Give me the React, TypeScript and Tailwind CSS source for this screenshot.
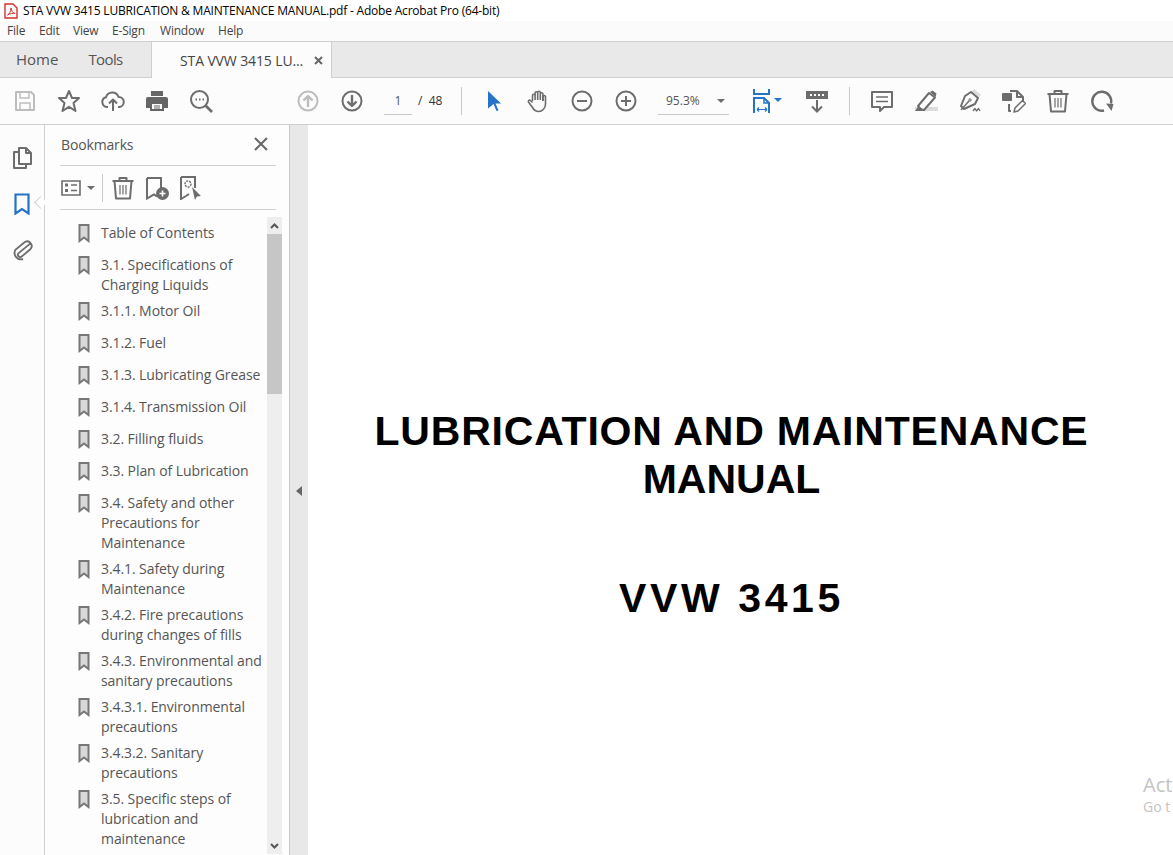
import { ReactNode } from "react";

const ui = "font-['Open_Sans','Noto_Sans',sans-serif]";

const Ico = ({ children, size = 24, color = "#6d6d6d", sw = 2 }: { children: ReactNode; size?: number; color?: string; sw?: number }) => (
  <svg width={size} height={size} viewBox="0 0 24 24" fill="none" stroke={color} strokeWidth={sw} strokeLinejoin="round">
    {children}
  </svg>
);

const Slot = ({ children }: { children: ReactNode }) => (
  <div className="w-[44px] h-[44px] flex items-center justify-center shrink-0">{children}</div>
);

const Sep = () => <div className="w-px h-[28px] bg-[#c9c9c9] shrink-0" />;

const Caret = ({ color = "#6d6d6d" }: { color?: string }) => (
  <div className="w-0 h-0 border-x-[4px] border-x-transparent border-t-[4px]" style={{ borderTopColor: color }} />
);

const TrashIcon = ({ size = 24 }: { size?: number }) => (
  <Ico size={size}>
    <path d="M1.500 5h21M8.500 5V2h7v3M3.500 5l1.500 17.500h14L20.500 5" />
    <path d="M9 9v9.500M12 9v9.500M15 9v9.500" strokeWidth={1.200} />
  </Ico>
);

const BookmarkRow = ({ lines }: { lines: string[] }) => (
  <div className="flex min-h-[32px] pb-[6px] pl-[18px]">
    <div className="w-[23px] shrink-0 pt-[1px]">
      <svg width="12" height="19" viewBox="0 0 12 19" fill="none" stroke="#777" strokeWidth="2">
        <path d="M1.500 1h9v16L6 13.500 1.500 17z" fill="#d8d8d8" />
      </svg>
    </div>
    <div className="text-[14px] leading-[20px] text-[#555] tracking-[-0.08px] whitespace-nowrap">
      {lines.map((l) => (
        <div key={l}>{l}</div>
      ))}
    </div>
  </div>
);

const bookmarks = [
  ["Table of Contents"],
  ["3.1. Specifications of", "Charging Liquids"],
  ["3.1.1. Motor Oil"],
  ["3.1.2. Fuel"],
  ["3.1.3. Lubricating Grease"],
  ["3.1.4. Transmission Oil"],
  ["3.2. Filling fluids"],
  ["3.3. Plan of Lubrication"],
  ["3.4. Safety and other", "Precautions for", "Maintenance"],
  ["3.4.1. Safety during", "Maintenance"],
  ["3.4.2. Fire precautions", "during changes of fills"],
  ["3.4.3. Environmental and", "sanitary precautions"],
  ["3.4.3.1. Environmental", "precautions"],
  ["3.4.3.2. Sanitary", "precautions"],
  ["3.5. Specific steps of", "lubrication and", "maintenance"],
];

export default function App() {
  return (
    <div className={`${ui} relative w-[1173px] h-[855px] overflow-hidden bg-white flex flex-col`}>
      {/* title bar */}
      <div className="h-[21px] flex items-center pl-[4px] shrink-0 bg-white">
        <svg width="14" height="16" viewBox="0 0 14 16" fill="none" className="mr-[5px]">
          <path d="M1 1h8l4 4v10H1z" fill="#fff" stroke="#d3312b" strokeWidth="1.400" />
          <path d="M3.500 12c2-1 3.500-4 3.500-7 .5 3 2 5 4 5.500-2.500-.5-5 0-7.500 1.500z" stroke="#d3312b" strokeWidth="1" />
        </svg>
        <span className="text-[12px] text-black tracking-[-0.2px] whitespace-nowrap">STA VVW 3415 LUBRICATION &amp; MAINTENANCE MANUAL.pdf - Adobe Acrobat Pro (64-bit)</span>
      </div>
      {/* menu bar */}
      <div className="h-[20px] flex items-center shrink-0 bg-[#fbfbfb] text-[12px] text-[#444] tracking-[-0.2px] pl-[7px]">
        <span className="w-[32px]">File</span>
        <span className="w-[34px]">Edit</span>
        <span className="w-[39px]">View</span>
        <span className="w-[48px]">E-Sign</span>
        <span className="w-[58px]">Window</span>
        <span>Help</span>
      </div>
      {/* tabs */}
      <div className="h-[37px] flex shrink-0 bg-[#e9e9e9] border-t border-t-[#cfcfcf] border-b border-b-[#cfcfcf] text-[15px] text-[#555]">
        <div className="w-[151px] flex items-center pl-[16px] gap-[30px]">
          <span>Home</span>
          <span className="tracking-[-0.6px]">Tools</span>
        </div>
        <div className="w-[181px] h-[36px] flex items-center pl-[28px] bg-[#fcfcfc] border-x border-x-[#cfcfcf] text-[14px] tracking-[-0.12px] text-[#444]">
          <span className="w-[134px] whitespace-nowrap">STA VVW 3415 LU...</span>
          <svg width="9" height="9" viewBox="0 0 9 9" stroke="#666" strokeWidth="2">
            <path d="M1 1l7 7M8 1L1 8" />
          </svg>
        </div>
      </div>
      {/* toolbar */}
      <div className="h-[47px] flex items-center shrink-0 bg-[#fcfcfc] border-b border-b-[#cfcfcf] pl-[3px]">
        <Slot>
          <Ico color="#bdbdbd">
            <path d="M3 3h15l3 3v15H3z" />
            <path d="M7 3v6h9V3M7 21v-7h10v7" strokeWidth={1.500} />
          </Ico>
        </Slot>
        <Slot>
          <Ico>
            <path d="M12 2l3 7h7l-5.500 5 2 8L12 17.800 5.500 22l2-8L2 9h7z" />
          </Ico>
        </Slot>
        <Slot>
          <Ico>
            <path d="M7 18H6a5 5 0 0 1-1-9.800A6.500 6.500 0 0 1 17.500 8 5 5 0 0 1 18 18h-1" />
            <path d="M12 22V11M8 14.500l4-4 4 4" />
          </Ico>
        </Slot>
        <Slot>
          <svg width="24" height="24" viewBox="0 0 24 24" fill="#666">
            <path d="M6 2h12v5H6z" />
            <path fillRule="evenodd" d="M3 8h18a2 2 0 0 1 2 2v9h-4v3H5v-3H1v-9a2 2 0 0 1 2-2zm4 7v5h10v-5z" />
            <path d="M9 16.500h6v1H9zM9 18.500h6v1H9z" />
          </svg>
        </Slot>
        <Slot>
          <Ico>
            <circle cx="10.500" cy="10.500" r="8.500" />
            <path d="M16.500 16.500L23 23" strokeWidth={2.600} />
            <path d="M6.500 10.500h1.500M10 10.500h1.500M13.500 10.500h1.500" />
          </Ico>
        </Slot>
        <div className="w-[63px] shrink-0" />
        <Slot>
          <Ico color="#bdbdbd">
            <circle cx="12" cy="12" r="9.500" />
            <path d="M12 18V7M7.500 11.500L12 7l4.500 4.500" strokeWidth={2.400} />
          </Ico>
        </Slot>
        <Slot>
          <Ico>
            <circle cx="12" cy="12" r="9.500" />
            <path d="M12 6v11M7.500 12.500L12 17l4.500-4.500" strokeWidth={2.400} />
          </Ico>
        </Slot>
        <div className="ml-[10px] w-[28px] h-[28px] border-b border-b-[#c9c9c9] flex items-center justify-center text-[12px] text-[#555]">1</div>
        <span className="ml-[6px] w-[40px] text-[12px] text-[#333] whitespace-nowrap">/ &nbsp;48</span>
        <div className="ml-[3px] flex items-center">
          <Sep />
        </div>
        <div className="w-[10px] shrink-0" />
        <Slot>
          <svg width="24" height="24" viewBox="0 0 24 24" fill="#2473c8">
            <path d="M6 2l13 12.500h-5.500l3 7-2 .500-3-7L6 19.500z" />
          </svg>
        </Slot>
        <Slot>
          <Ico sw={1.600}>
            <path d="M6.500 12V6.500a1.300 1.300 0 0 1 2.600 0V11M9.100 11V4a1.300 1.300 0 0 1 2.600 0v7M11.700 11V3.500a1.300 1.300 0 0 1 2.600 0V11M14.300 11V5a1.300 1.300 0 0 1 2.600 0v7" />
            <path d="M17 12V7.500a1.300 1.300 0 0 1 2.500 0V15c0 4-3 7.500-7 7.500-3 0-4.500-1.500-6-4L2.500 13c-.7-1.300.8-2.500 2-1.500l2 2" />
          </Ico>
        </Slot>
        <Slot>
          <Ico>
            <circle cx="12" cy="12" r="9.500" />
            <path d="M7 12h10" />
          </Ico>
        </Slot>
        <Slot>
          <Ico>
            <circle cx="12" cy="12" r="9.500" />
            <path d="M7 12h10M12 7v10" />
          </Ico>
        </Slot>
        <div className="ml-[10px] w-[71px] h-[28px] border-b border-b-[#c9c9c9] flex items-center pl-[8px] text-[12px] text-[#555] shrink-0">
          <span className="w-[51px]">95.3%</span>
          <Caret />
        </div>
        <div className="w-[11px] shrink-0" />
        <Slot>
          <div className="flex items-start gap-[2px] ml-[10px]">
            <svg width="20" height="24" viewBox="0 0 20 24" fill="none" stroke="#2473c8" strokeWidth="2">
              <path d="M2 0v5h15V0M2 24V9h10l5 5v10" />
              <path d="M12 9v5h5" strokeWidth="1.500" />
              <path d="M5 20.500h10M5 20.500l2-2M5 20.500l2 2M15 20.500l-2-2M15 20.500l-2 2" strokeWidth="1.200" />
            </svg>
            <div className="mt-[9px]">
              <Caret color="#2473c8" />
            </div>
          </div>
        </Slot>
        <div className="w-[11px] shrink-0" />
        <Slot>
          <svg width="24" height="24" viewBox="0 0 24 24" fill="none">
            <path d="M1 2h22v8H1z" fill="#6d6d6d" />
            <path d="M5 5h2v2H5zM9 5h2v2H9zM13 5h2v2h-2zM17 5h2v2h-2z" fill="#fff" />
            <path d="M12 11v11M7 17.500l5 5 5-5" stroke="#6d6d6d" strokeWidth="2" />
          </svg>
        </Slot>
        <div className="w-[10px] shrink-0" />
        <Sep />
        <div className="w-[10px] shrink-0" />
        <Slot>
          <Ico>
            <path d="M2 3h20v15h-8l-4 4v-4H2z" />
            <path d="M6 8h12M6 12.500h12" strokeWidth={1.400} />
          </Ico>
        </Slot>
        <Slot>
          <svg width="24" height="24" viewBox="0 0 24 24" fill="none">
            <path d="M1 18h23v4H1z" fill="#dcdcdc" />
            <path d="M4 17l11-13 6 4.500L10 21l-3-.500z" fill="#fff" stroke="#6d6d6d" strokeWidth="2" strokeLinejoin="round" />
            <path d="M16 3l2.500-1.500 4 3-1 3.500z" fill="#6d6d6d" />
            <path d="M1 22h7l1-2-5-2z" fill="#6d6d6d" />
          </svg>
        </Slot>
        <Slot>
          <svg width="24" height="24" viewBox="0 0 24 24" fill="none" stroke="#6d6d6d" strokeWidth="2" strokeLinejoin="round">
            <path d="M15 1l7 6" stroke="#dcdcdc" strokeWidth="3" />
            <path d="M13 3l7 6-3 6-11 5-3-3 4-10z" />
            <path d="M3 21l8-9" strokeWidth="1.400" />
            <circle cx="12" cy="11" r="1.200" strokeWidth="1" />
            <path d="M15 22l2-2.500 1.500 2.500 2-2.500 1.500 2.500" strokeWidth="1.400" />
          </svg>
        </Slot>
        <Slot>
          <svg width="24" height="24" viewBox="0 0 24 24" fill="none" stroke="#6d6d6d" strokeWidth="2" strokeLinejoin="round">
            <path d="M8 2h7l6 6v4M9 22H7v-7" />
            <path d="M15 2v6h6" />
            <path d="M1 5h8v6H1z" fill="#6d6d6d" />
            <path d="M12 23l1-4 7.500-7.500 3 3-7.500 7.500z" fill="#fff" strokeWidth="1.500" />
          </svg>
        </Slot>
        <Slot>
          <TrashIcon />
        </Slot>
        <Slot>
          <Ico sw={2.400}>
            <path d="M14 21.500a9.500 9.500 0 1 1 7-7" />
            <path d="M16 14.500l7.500.5-2 7z" fill="#6d6d6d" stroke="none" />
          </Ico>
        </Slot>
      </div>

      {/* body */}
      <div className="flex-1 min-h-0 flex">
        {/* left rail */}
        <div className="relative w-[45px] shrink-0 bg-[#fcfcfc] border-r border-r-[#cfcfcf] flex flex-col items-center pt-[21px] gap-[23px] pr-[1px]">
          <svg width="22" height="24" viewBox="0 0 22 24" fill="none" stroke="#6d6d6d" strokeWidth="2" strokeLinejoin="round">
            <path d="M8 2h7l5 5v11H8z" />
            <path d="M15 2v5h5" />
            <path d="M8 6H3v16h12v-4" />
          </svg>
          <svg width="16" height="22" viewBox="0 0 16 22" fill="none" stroke="#2473c8" strokeWidth="2.200">
            <path d="M1.500 1.500h13v19L8 16l-6.500 4.500z" />
          </svg>
          <svg width="22" height="24" viewBox="0 0 24 24" fill="none" stroke="#6d6d6d" strokeWidth="2" strokeLinecap="round" className="-mt-[1px]">
            <path d="M20 5l-11 12a2.500 2.500 0 0 0 4 3l8-9a5 5 0 0 0-7-7l-9 10a7 7 0 0 0 9 9" transform="rotate(8 12 12)" />
          </svg>
          <div className="absolute right-[-1px] top-[73px] w-[9px] h-[9px] rotate-45 bg-white border-l border-b border-[#cfcfcf]" />
        </div>

        {/* bookmarks panel */}
        <div className="w-[244px] shrink-0 bg-[#fdfdfd] flex flex-col pl-[15px] pr-[13px]">
          <div className="h-[41px] w-[216px] flex items-center justify-between border-b border-b-[#cfcfcf] shrink-0 pl-[1px] pr-[8px] pb-[2px]">
            <span className="text-[14px] text-[#555] tracking-[-0.15px]">Bookmarks</span>
            <svg width="14" height="14" viewBox="0 0 14 14" stroke="#666" strokeWidth="2">
              <path d="M1 1l12 12M13 1L1 13" />
            </svg>
          </div>
          <div className="h-[44px] w-[216px] flex items-center border-b border-b-[#cfcfcf] shrink-0">
            <div className="pl-[1px] flex items-center gap-[6px]">
              <svg width="20" height="16" viewBox="0 0 20 16" fill="none" stroke="#6d6d6d" strokeWidth="1.600">
                <path d="M1 1h18v14H1z" />
                <path d="M4 5h3M4 10.500h3" strokeWidth="3" />
                <path d="M10 5h6M10 10.500h6" />
              </svg>
              <Caret />
            </div>
            <div className="ml-[7px] w-px h-[28px] bg-[#c9c9c9]" />
            <div className="ml-[8px] flex items-center gap-[10px]">
              <TrashIcon />
              <svg width="24" height="24" viewBox="0 0 24 24" fill="none" stroke="#6d6d6d" strokeWidth="2">
                <path d="M2 2h14v11M12 20.500l-3-2-7 4V2" />
                <circle cx="17.500" cy="17.500" r="5.500" fill="#6d6d6d" />
                <path d="M14.500 17.500h6M17.500 14.500v6" stroke="#fff" strokeWidth="1.600" />
              </svg>
              <svg width="24" height="24" viewBox="0 0 24 24" fill="none" stroke="#6d6d6d" strokeWidth="2">
                <path d="M2 1h14v11M10 18l-3 2-5 3V1" />
                <circle cx="9" cy="8" r="3" strokeWidth="1.400" strokeDasharray="2 1" />
                <path d="M13 11l9 9-4 .5-2 3.500z" fill="#6d6d6d" stroke="none" />
              </svg>
            </div>
          </div>
          <div className="relative flex-1 min-h-0 w-[222px] overflow-hidden mt-[7px]">
            <div className="pt-[6px] w-[207px]">
              {bookmarks.map((b) => (
                <BookmarkRow key={b[0]} lines={b} />
              ))}
            </div>
            <div className="absolute right-0 top-0 h-[637px] w-[15px] bg-[#eeeeee] flex flex-col items-center">
              <div className="h-[17px] flex items-center justify-center">
                <svg width="9" height="6" viewBox="0 0 9 6" fill="none" stroke="#555" strokeWidth="2">
                  <path d="M1 5l3.500-3.500L8 5" />
                </svg>
              </div>
              <div className="h-[160px] w-full bg-[#c6c6c6]" />
              <div className="flex-1" />
              <div className="h-[17px] flex items-center justify-center">
                <svg width="9" height="6" viewBox="0 0 9 6" fill="none" stroke="#555" strokeWidth="2">
                  <path d="M1 1l3.500 3.500L8 1" />
                </svg>
              </div>
            </div>
          </div>
        </div>

        {/* collapse strip */}
        <div className="w-[19px] shrink-0 bg-[#e8e8e8] border-l border-l-[#c9c9c9] flex items-center justify-center pt-[2px]">
          <div className="w-0 h-0 mr-[1px] border-y-[5px] border-y-transparent border-r-[6px] border-r-[#666]" />
        </div>

        {/* page */}
        <div className="relative flex-1 bg-white pt-[282px] pr-[18px] text-center text-black font-['Liberation_Sans',Arial,sans-serif] font-bold text-[41px] leading-[48px]">
          <div className="tracking-[0.8px]">
            LUBRICATION AND MAINTENANCE
            <br />
            <span className="tracking-[0px]">MANUAL</span>
          </div>
          <div className="mt-[71px] tracking-[3.6px]">VVW 3415</div>
          <div className={`${ui} absolute left-[835px] top-[648px] font-normal text-left text-[#c4c4c4] whitespace-nowrap`}>
            <div className="text-[20px] leading-[24px]">Act</div>
            <div className="text-[14px] leading-[20px]">Go t</div>
          </div>
        </div>
      </div>
    </div>
  );
}
